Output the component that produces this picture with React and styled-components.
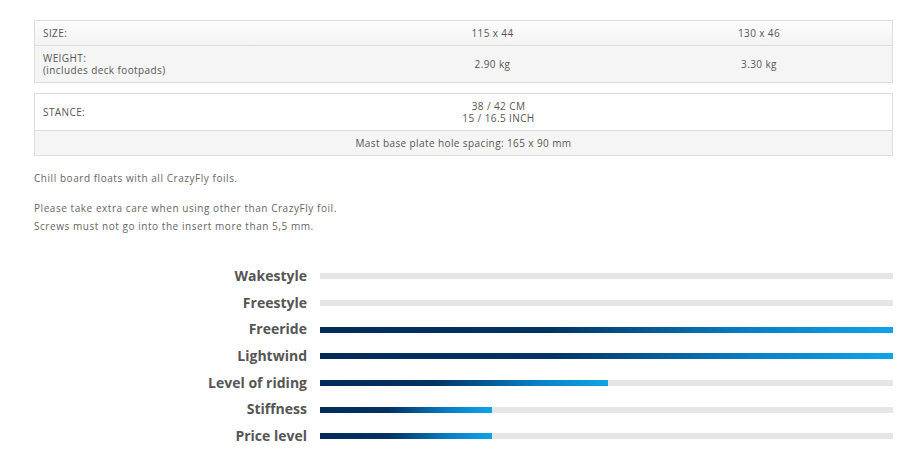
import styled, { createGlobalStyle } from "styled-components";

const GlobalStyle = createGlobalStyle`
  body {
    margin: 0;
    background: #fff;
    font-family: "Open Sans", "Liberation Sans", sans-serif;
    color: #555;
  }
`;

const Page = styled.div`
  width: 859px;
  padding: 20px 0 0 34px;
`;

const SpecTable = styled.div`
  border: 1px solid #dcdcdc;
  margin-bottom: ${(p) => p.$gap || 0}px;
`;

const Row = styled.div`
  display: grid;
  grid-template-columns: 324px 267px 1fr;
  align-items: center;
  min-height: ${(p) => p.$h}px;
  background: ${(p) =>
    p.$tone === "grad"
      ? "linear-gradient(180deg, #fdfdfd 0%, #f3f3f3 100%)"
      : p.$tone === "grey"
      ? "#f5f5f5"
      : "#fff"};
  & + & {
    border-top: 1px solid #dcdcdc;
  }
`;

const Cell = styled.div`
  font-size: 10px;
  line-height: 12px;
  padding: 0 ${(p) => (p.$shift ? "0 0 12px" : "8px")};
  text-align: ${(p) => (p.$center ? "center" : "left")};
  grid-column: ${(p) => (p.$full ? "1 / -1" : "auto")};
  letter-spacing: 0.4px;
`;

const Note = styled.p`
  margin: ${(p) => p.$top}px 0 0;
  font-size: 10px;
  line-height: 18px;
  letter-spacing: 0.55px;
  color: #666;
`;

const Ratings = styled.div`
  margin-top: 28px;
  display: grid;
  grid-template-columns: 273px 1fr;
  column-gap: 13px;
`;

const Label = styled.div`
  font-weight: 700;
  font-size: 14px;
  color: #555;
  text-align: right;
  height: 26.67px;
  line-height: 26.67px;
`;

const Track = styled.div`
  align-self: center;
  height: 6px;
  background: #e6e6e6;
`;

const Fill = styled.div`
  height: 100%;
  background: linear-gradient(90deg, #012b57 0%, #023362 40%, #0a7fc4 75%, #0fa3e8 100%);
`;

const ratings = [
  ["Wakestyle", 0],
  ["Freestyle", 0],
  ["Freeride", 100],
  ["Lightwind", 100],
  ["Level of riding", 50.2],
  ["Stiffness", 30],
  ["Price level", 30],
];

export default function App() {
  return (
    <Page>
      <GlobalStyle />
      <SpecTable $gap={10}>
        <Row $h={24} $tone="grad">
          <Cell>SIZE:</Cell>
          <Cell $center>115 x 44</Cell>
          <Cell $center>130 x 46</Cell>
        </Row>
        <Row $h={36} $tone="grey">
          <Cell>
            WEIGHT:
            <br />
            (includes deck footpads)
          </Cell>
          <Cell $center>2.90 kg</Cell>
          <Cell $center>3.30 kg</Cell>
        </Row>
      </SpecTable>
      <SpecTable>
        <Row $h={36}>
          <Cell>STANCE:</Cell>
          <Cell $center $shift>
            38 / 42 CM
            <br />
            15 / 16.5 INCH
          </Cell>
          <Cell />
        </Row>
        <Row $h={24} $tone="grey">
          <Cell $full $center>
            Mast base plate hole spacing: 165 x 90 mm
          </Cell>
        </Row>
      </SpecTable>
      <Note $top={13}>Chill board floats with all CrazyFly foils.</Note>
      <Note $top={12}>
        Please take extra care when using other than CrazyFly foil.
        <br />
        Screws must not go into the insert more than 5,5 mm.
      </Note>
      <Ratings>
        {ratings.map(([name, value]) => [
          <Label key={name}>{name}</Label>,
          <Track key={name + "-bar"}>
            <Fill style={{ width: `${value}%` }} />
          </Track>,
        ])}
      </Ratings>
    </Page>
  );
}
